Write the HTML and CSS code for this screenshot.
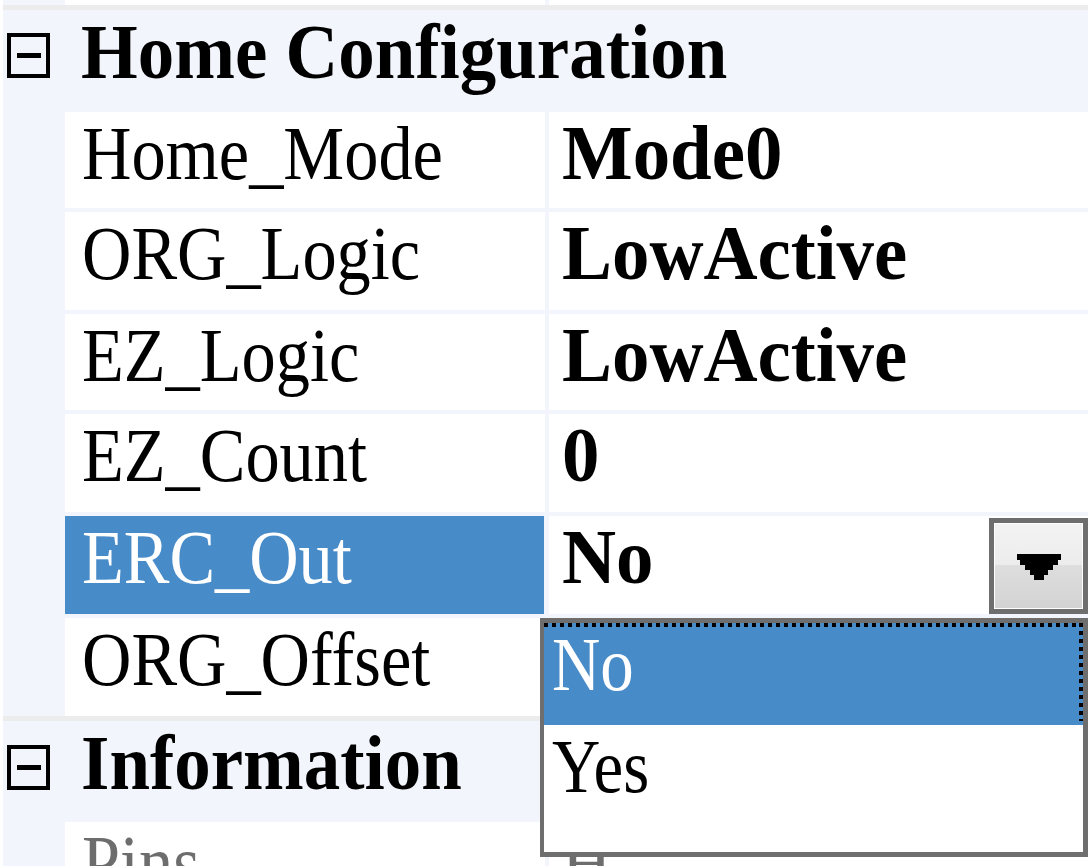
FILE: index.html
```html
<!DOCTYPE html>
<html>
<head>
<meta charset="utf-8">
<link rel="stylesheet" href="styles.css">
</head>
<body>
<div class="page">
  <div class="grid">
    <div class="row top"><div class="gut"></div><div class="name"></div><div class="val"></div></div>
    <div class="hsep"></div>
    <div class="cat">
      <svg class="box" width="43" height="45" viewBox="0 0 43 45"><rect x="2" y="2" width="39" height="41" fill="none" stroke="#000" stroke-width="4"/><rect x="10" y="20" width="24" height="5" fill="#000"/></svg>
      <span class="ct">Home Configuration</span>
    </div>
    <div class="row short"><div class="gut"></div><div class="name"><span class="t">Home_Mode</span></div><div class="val"><span class="b">Mode0</span></div></div>
    <div class="vsep"></div>
    <div class="row"><div class="gut"></div><div class="name"><span class="t">ORG_Logic</span></div><div class="val"><span class="b">LowActive</span></div></div>
    <div class="vsep"></div>
    <div class="row short"><div class="gut"></div><div class="name"><span class="t">EZ_Logic</span></div><div class="val"><span class="b">LowActive</span></div></div>
    <div class="vsep"></div>
    <div class="row"><div class="gut"></div><div class="name"><span class="t">EZ_Count</span></div><div class="val"><span class="b">0</span></div></div>
    <div class="vsep"></div>
    <div class="row sel"><div class="gut"></div><div class="name"><span class="t">ERC_Out</span></div><div class="val"><span class="b">No</span>
      <div class="ddbtn"><div class="ddin"><svg width="44" height="26" viewBox="0 0 44 26"><path d="M0 0H44V6H41V11H36V16H31V21H27V26H17V21H13V16H8V11H3V6H0Z" fill="#000"/></svg></div></div>
    </div></div>
    <div class="vsep"></div>
    <div class="row"><div class="gut"></div><div class="name"><span class="t">ORG_Offset</span></div><div class="val"></div></div>
    <div class="hsep"></div>
    <div class="cat info">
      <svg class="box" width="43" height="45" viewBox="0 0 43 45"><rect x="2" y="2" width="39" height="41" fill="none" stroke="#000" stroke-width="4"/><rect x="10" y="20" width="24" height="5" fill="#000"/></svg>
      <span class="ct">Information</span>
    </div>
    <div class="row ro"><div class="gut"></div><div class="name"><span class="t">Pins</span></div><div class="val"><span class="t">H</span></div></div>
  </div>
  <div class="ddlist">
    <div class="opt hi"><span class="t">No</span></div>
    <div class="opt"><span class="t">Yes</span></div>
  </div>
</div>
</body>
</html>
```
FILE: styles.css
```css
html, body {
  margin: 0;
  padding: 0;
  background: #fff;
  overflow: hidden;
}
body {
  width: 1091px;
  height: 866px;
  font-family: "Liberation Serif", "Noto Sans CJK TC", serif;
  color: #000;
}
.page {
  position: relative;
  width: 1091px;
  height: 866px;
  overflow: hidden;
}
.grid {
  margin-left: 3px;
  width: 1085px;
}
.row {
  display: flex;
  height: 98px;
  background: #fff;
}
.row.short { height: 96px; }
.row.top { height: 5px; }
.gut {
  width: 62px;
  flex: none;
  background: #f2f5fb;
}
.name {
  width: 480px;
  flex: none;
  padding-left: 17px;
  box-sizing: border-box;
  line-height: 82px;
  font-size: 76px;
  white-space: nowrap;
  overflow: hidden;
}
.val {
  flex: 1;
  display: flex;
  align-items: flex-start;
  border-left: 4px solid #f2f5fb;
  padding-left: 13px;
  line-height: 82px;
  white-space: nowrap;
}
.t {
  display: inline-block;
  font-size: 76px;
  transform: scaleX(0.9);
  transform-origin: left center;
}
.b {
  display: inline-block;
  font-size: 78px;
  font-weight: bold;
  transform: scaleX(0.96);
  transform-origin: left center;
}
.vsep {
  height: 4px;
  background: #f2f5fb;
}
.hsep {
  height: 5px;
  background: #ececec;
}
.cat {
  display: flex;
  align-items: flex-start;
  height: 102px;
  background: #f2f5fb;
  line-height: 84px;
}
.cat.info { height: 101px; }
.box {
  flex: none;
  margin-left: 4px;
  margin-top: 23px;
}
.cat.info .box { margin-top: 24px; }
.ct {
  display: inline-block;
  margin-left: 31px;
  font-size: 78px;
  font-weight: bold;
  white-space: nowrap;
  transform: scaleX(0.935);
  transform-origin: left center;
}
.row.sel .name {
  background: #478bc9;
  color: #fff;
  width: 479px;
}
.row.sel .val { border-left-width: 5px; }
.ddbtn {
  margin-left: auto;
  margin-top: 2px;
  width: 99px;
  height: 96px;
  box-sizing: border-box;
  border: 5px solid #6e6e6e;
  padding: 1px;
  background: #fff;
}
.ddin {
  height: 100%;
  display: flex;
  align-items: center;
  justify-content: center;
  background: linear-gradient(#f3f3f3 0%, #ececec 49%, #dedede 49%, #d3d3d3 100%);
}
.ddin svg { display: block; margin-top: 2px; }
.row.ro .name, .row.ro .val { color: #6d6d6d; }
.row.ro .name { line-height: 80px; }
.ddlist {
  position: absolute;
  left: 540px;
  top: 618px;
  width: 548px;
  height: 239px;
  box-sizing: border-box;
  border-style: solid;
  border-color: #6e6e6e;
  border-width: 5px 5px 5px 4px;
  background: #fff;
}
.opt {
  position: relative;
  height: 102px;
  padding-left: 8px;
  line-height: 82px;
  white-space: nowrap;
}
.opt .t { transform: scaleX(0.88); }
.opt.hi {
  background: #478bc9;
  color: #fff;
}
.opt.hi::before {
  content: "";
  position: absolute;
  left: 0;
  right: 0;
  top: 0;
  height: 4px;
  background: repeating-linear-gradient(90deg, #000 0 4px, transparent 4px 8px);
}
.opt.hi::after {
  content: "";
  position: absolute;
  right: 0;
  top: 0;
  bottom: 4px;
  width: 4px;
  background: repeating-linear-gradient(180deg, #000 0 4px, transparent 4px 8px);
}
```
